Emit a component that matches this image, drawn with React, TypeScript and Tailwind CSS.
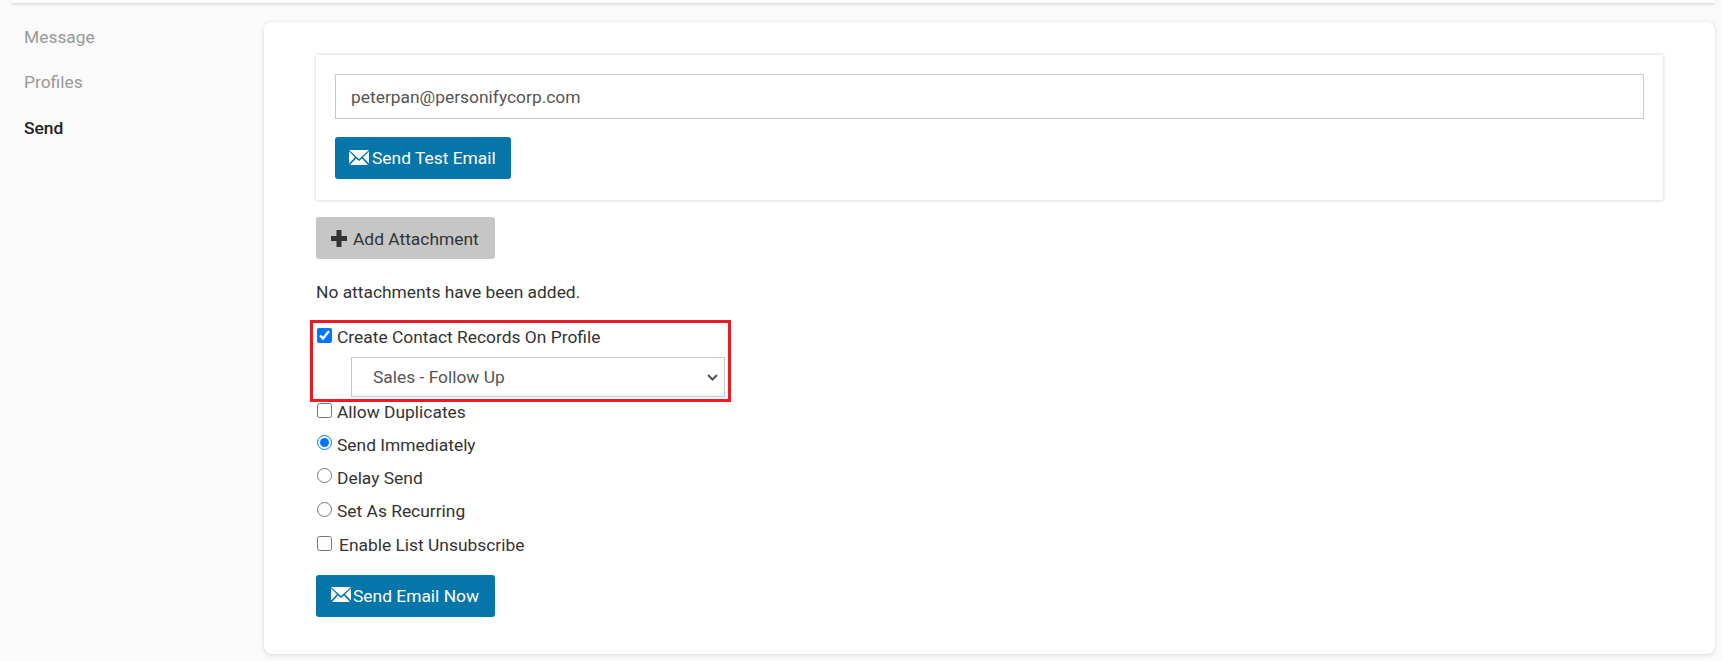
import React from 'react';

function MailIcon() {
  return (
    <svg width="20" height="17" viewBox="0 0 20 17" className="shrink-0 -translate-y-[1px]" fill="#fff">
      <path d="M0 1h20L10 10z" />
      <path d="M0 2.6v12l6-6.4zM20 2.6v12l-6-6.4z" />
      <path d="M1 16h18l-6-6.6-3 2.6-3-2.6z" />
    </svg>
  );
}

function PlusIcon() {
  return (
    <svg width="16" height="17" viewBox="0 0 16 17" className="shrink-0" fill="#333">
      <path d="M5.5 0h5v6H16v5h-5.5v6h-5v-6H0V6h5.5z" />
    </svg>
  );
}

function Check({ label, checked, gap = 'ml-[5px]', className = '' }: { label: string; checked?: boolean; gap?: string; className?: string }) {
  return (
    <label className={`flex items-center h-[33px] ${className}`}>
      <input type="checkbox" defaultChecked={checked} className="w-[15px] h-[15px] m-0 -translate-y-[2px]" />
      <span className={gap}>{label}</span>
    </label>
  );
}

function Radio({ label, checked }: { label: string; checked?: boolean }) {
  return (
    <label className="flex items-center h-[33.3px]">
      <input type="radio" name="send" defaultChecked={checked} className="w-[15px] h-[15px] m-0 -translate-y-[2px]" />
      <span className="ml-[5px]">{label}</span>
    </label>
  );
}

export default function App() {
  return (
    <div className="h-[661px] overflow-hidden bg-[#fafafa] font-['Roboto',sans-serif] text-[17.4px] text-[#333]">
      <div className="mx-[12px] mr-[7px] h-[3px] bg-white shadow-[0_1px_3px_rgba(0,0,0,0.2)]" />
      <div className="flex pt-[19px] pr-[7px]">
        <nav className="w-[264px] shrink-0 pl-[24px] pt-[3px]">
          <div className="h-[45px] leading-[24px] text-[#999]">Message</div>
          <div className="h-[46px] leading-[24px] text-[#999]">Profiles</div>
          <div className="leading-[24px] font-medium text-[#222]">Send</div>
        </nav>
        <main className="flex-1 h-[632px] rounded-lg bg-white pt-[33px] pl-[52px] pr-[52px] shadow-[0_1px_4px_rgba(0,0,0,0.15)]">
          <div className="h-[145px] bg-white px-[19px] pt-[19px] shadow-[0_0_4px_rgba(0,0,0,0.2)]">
            <input
              type="text"
              defaultValue="peterpan@personifycorp.com"
              className="block w-full h-[45px] border border-[#c8c8c8] px-[15px] text-[#555] outline-none"
            />
            <button className="mt-[18px] flex items-center h-[42px] w-[176px] rounded-[3px] bg-[#0575aa] pl-[14px] text-white">
              <MailIcon />
              <span className="ml-[3px]">Send Test Email</span>
            </button>
          </div>
          <button className="mt-[17px] flex items-center h-[42px] w-[179px] rounded-[3px] bg-[#c6c6c6] pl-[15px] text-[#333]">
            <PlusIcon />
            <span className="ml-[6px] translate-y-[1px]">Add Attachment</span>
          </button>
          <p className="mt-[21px] leading-[24px]">No attachments have been added.</p>
          <div className="-ml-[6px] mt-[16px] h-[82px] w-[421px] border-[3px] border-[#ed1c24] pl-[4px]">
            <Check label="Create Contact Records On Profile" checked className="-mt-[2px]" />
            <div className="relative ml-[34px] mt-[3px] w-[374px]">
              <select className="block h-[40px] w-full appearance-none border border-[#c8c8c8] bg-white pl-[21px] text-[#555] outline-none">
                <option>Sales - Follow Up</option>
              </select>
              <svg width="11" height="7" viewBox="0 0 11 7" fill="none" stroke="#555" strokeWidth="2" className="absolute right-[7px] top-[17px]">
                <path d="M1 1l4.5 4.5L10 1" />
              </svg>
            </div>
          </div>
          <div className="ml-[1px]">
            <Check label="Allow Duplicates" className="-mt-[6px] mb-[-1px]" />
            <Radio label="Send Immediately" checked />
            <Radio label="Delay Send" />
            <Radio label="Set As Recurring" />
            <Check label="Enable List Unsubscribe" gap="ml-[7px]" className="mt-[1px]" />
          </div>
          <button className="mt-[13px] flex items-center h-[42px] w-[179px] rounded-[3px] bg-[#0575aa] pl-[15px] text-white">
            <MailIcon />
            <span className="ml-[2px]">Send Email Now</span>
          </button>
        </main>
      </div>
    </div>
  );
}
